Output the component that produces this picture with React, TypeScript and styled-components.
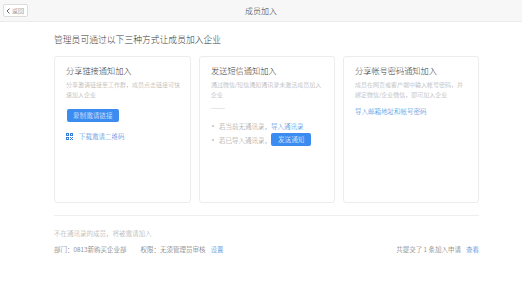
import React from "react";
import styled, { createGlobalStyle } from "styled-components";

const GlobalStyle = createGlobalStyle`
  html, body {
    margin: 0;
    padding: 0;
    background: #fff;
    font-family: "Noto Sans CJK SC", "Noto Sans", "Liberation Sans", sans-serif;
    font-weight: 300;
    color: #333;
  }
  * { box-sizing: border-box; }
`;

const Page = styled.div`
  width: 522px;
  height: 307px;
  background: #fff;
`;

const TopBar = styled.header`
  position: relative;
  height: 22px;
  background: #f7f7f7;
  border-bottom: 1px solid #ececec;
  display: flex;
  align-items: center;
  justify-content: center;
`;

const BackButton = styled.button`
  position: absolute;
  left: 3px;
  top: 4px;
  height: 13px;
  padding: 0 3px 0 2px;
  display: flex;
  align-items: center;
  gap: 1px;
  background: #fff;
  border: 1px solid #dcdcdc;
  border-radius: 2px;
  font-family: inherit;
  font-weight: 300;
  font-size: 6px;
  color: #555;
  line-height: 1;
`;

const Title = styled.h1`
  margin: 0;
  font-size: 8px;
  font-weight: 300;
  color: #444;
  line-height: 12px;
`;

const Main = styled.main`
  margin-left: 54px;
  width: 425px;
  padding-top: 11px;
`;

const Heading = styled.h2`
  margin: 0;
  font-size: 8.8px;
  font-weight: 300;
  line-height: 14px;
  color: #3a3a3a;
`;

const Cards = styled.div`
  margin-top: 9px;
  display: grid;
  grid-template-columns: 137px 136px 136px;
  column-gap: 8px;
`;

const Card = styled.section`
  height: 147px;
  border: 1px solid #ececec;
  border-radius: 3px;
  padding: 7px 8px 0 11px;
  display: flex;
  flex-direction: column;
  align-items: flex-start;
`;

const CardTitle = styled.h3`
  margin: 0;
  font-size: 8.2px;
  font-weight: 300;
  line-height: 12px;
  color: #3a3a3a;
`;

const Desc = styled.p`
  margin: 4px 0 0;
  font-size: 6px;
  line-height: 10px;
  color: #a6a6a6;
  white-space: nowrap;
`;

const PrimaryButton = styled.button<{ $wide?: boolean }>`
  margin-top: ${(p) => (p.$wide ? "9px" : "0")};
  margin-left: ${(p) => (p.$wide ? "1px" : "0")};
  height: 13px;
  padding: 0 ${(p) => (p.$wide ? "6px" : "7px")};
  background: #3a8cf0;
  border: none;
  border-radius: 2px;
  color: #fff;
  font-family: inherit;
  font-weight: 300;
  font-size: 6.6px;
  line-height: 13px;
`;

const LinkRow = styled.a<{ $gap?: number }>`
  margin-top: ${(p) => p.$gap ?? 9}px;
  display: flex;
  align-items: center;
  gap: 6px;
  font-size: 6.5px;
  line-height: 11px;
  color: #2e76d6;
  text-decoration: none;
`;

const ShortRule = styled.hr`
  margin: 8px 0 0;
  width: 14px;
  border: none;
  border-top: 1px solid #e6e6e6;
`;

const Bullets = styled.ul`
  margin: 11px 0 0;
  padding: 0;
  list-style: none;
  display: flex;
  flex-direction: column;
  gap: 1px;
`;

const Bullet = styled.li`
  display: flex;
  align-items: center;
  min-height: 12px;
  font-size: 6.5px;
  color: #8f8f8f;
  &::before {
    content: "";
    width: 2px;
    height: 2px;
    border-radius: 50%;
    background: #c0c0c0;
    margin: 0 5px 0 1px;
  }
`;

const InlineLink = styled.a`
  color: #2e76d6;
  text-decoration: none;
  margin-right: 4px;
`;

const Divider = styled.hr`
  margin: 12px 0 0;
  border: none;
  border-top: 1px solid #eeeeee;
`;

const Note = styled.p`
  margin: 12px 0 0;
  font-size: 6.5px;
  line-height: 10px;
  color: #a3a3a3;
`;

const Footer = styled.div`
  margin-top: 6px;
  display: flex;
  justify-content: space-between;
  font-size: 6.5px;
  line-height: 10px;
  color: #555;
`;

const FooterGroup = styled.div`
  display: flex;
  gap: 14px;
`;

const FootLink = styled.a`
  color: #2e76d6;
  text-decoration: none;
  margin-left: 5px;
`;

function QrIcon() {
  return (
    <svg width="7" height="7" viewBox="0 0 7 7" fill="#3a7fd9">
      <rect x="0" y="0" width="3" height="3" />
      <rect x="4" y="0" width="3" height="3" />
      <rect x="0" y="4" width="3" height="3" />
      <rect x="4" y="4" width="1" height="1" />
      <rect x="6" y="4" width="1" height="1" />
      <rect x="5" y="5" width="1" height="1" />
      <rect x="4" y="6" width="1" height="1" />
      <rect x="6" y="6" width="1" height="1" />
      <rect x="1" y="1" width="1" height="1" fill="#fff" />
      <rect x="5" y="1" width="1" height="1" fill="#fff" />
      <rect x="1" y="5" width="1" height="1" fill="#fff" />
    </svg>
  );
}

function Chevron() {
  return (
    <svg width="5" height="6" viewBox="0 0 5 6">
      <path d="M3.5 0.5 L1 3 L3.5 5.5" fill="none" stroke="#555" strokeWidth="0.9" />
    </svg>
  );
}

export default function App() {
  return (
    <Page>
      <GlobalStyle />
      <TopBar>
        <BackButton>
          <Chevron />
          返回
        </BackButton>
        <Title>成员加入</Title>
      </TopBar>
      <Main>
        <Heading>管理员可通过以下三种方式让成员加入企业</Heading>
        <Cards>
          <Card>
            <CardTitle>分享链接通知加入</CardTitle>
            <Desc>
              分享邀请链接至工作群，成员点击链接可快
              <br />
              速加入企业
            </Desc>
            <PrimaryButton $wide>复制邀请链接</PrimaryButton>
            <LinkRow href="#">
              <QrIcon />
              下载邀请二维码
            </LinkRow>
          </Card>
          <Card>
            <CardTitle>发送短信通知加入</CardTitle>
            <Desc>
              通过微信/短信通知通讯录未激活成员加入
              <br />
              企业
            </Desc>
            <ShortRule />
            <Bullets>
              <Bullet>
                若当前无通讯录，<InlineLink href="#">导入通讯录</InlineLink>
              </Bullet>
              <Bullet>
                若已导入通讯录，<PrimaryButton>发送通知</PrimaryButton>
              </Bullet>
            </Bullets>
          </Card>
          <Card>
            <CardTitle>分享帐号密码通知加入</CardTitle>
            <Desc>
              成员在网页或客户端中输入帐号密码，并
              <br />
              绑定微信/企业微信，即可加入企业
            </Desc>
            <LinkRow href="#" $gap={6}>
              导入邮箱地址和帐号密码
            </LinkRow>
          </Card>
        </Cards>
        <Divider />
        <Note>不在通讯录的成员，将被邀请加入</Note>
        <Footer>
          <FooterGroup>
            <span>部门：0813新购买企业部</span>
            <span>
              权限：无须管理员审核<FootLink href="#">设置</FootLink>
            </span>
          </FooterGroup>
          <span>
            共提交了 1 条加入申请<FootLink href="#">查看</FootLink>
          </span>
        </Footer>
      </Main>
    </Page>
  );
}
